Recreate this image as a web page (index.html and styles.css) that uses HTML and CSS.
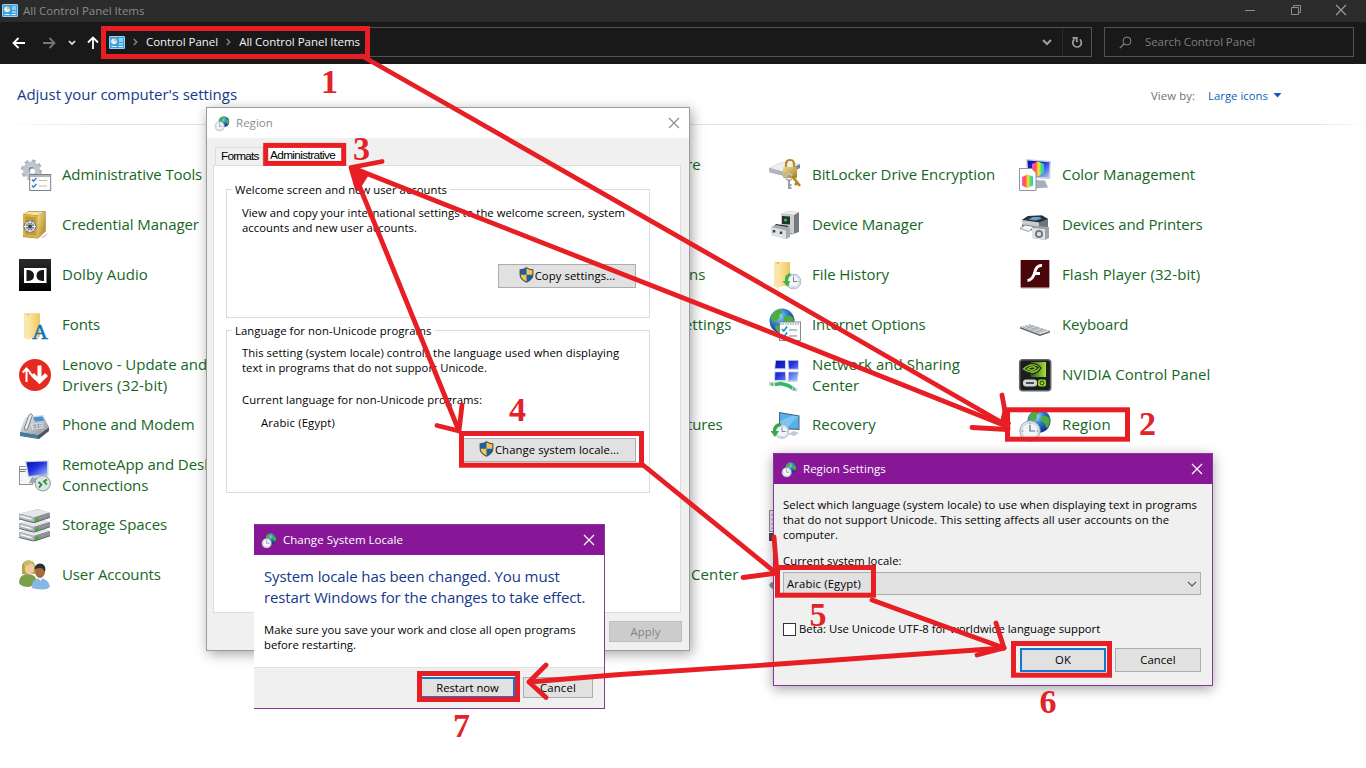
FILE: index.html
```html
<!DOCTYPE html>
<html lang="en">
<head>
<meta charset="utf-8">
<title>All Control Panel Items</title>
<link rel="stylesheet" href="styles.css">
</head>
<body>
<svg class="defs" width="0" height="0" aria-hidden="true">
  <defs>
    <linearGradient id="g-grey" x1="0" y1="0" x2="1" y2="1"><stop offset="0" stop-color="#f4f5f6"/><stop offset="1" stop-color="#8b9096"/></linearGradient>
    <linearGradient id="g-gold" x1="0" y1="0" x2="1" y2="1"><stop offset="0" stop-color="#f3dd8c"/><stop offset="1" stop-color="#a97c1c"/></linearGradient>
    <linearGradient id="g-folder" x1="0" y1="0" x2="1" y2="0"><stop offset="0" stop-color="#fbe6a0"/><stop offset="1" stop-color="#efc75e"/></linearGradient>
    <linearGradient id="g-blue" x1="0" y1="0" x2="1" y2="1"><stop offset="0" stop-color="#0a10a8"/><stop offset=".45" stop-color="#2433dd"/><stop offset="1" stop-color="#9fc3ff"/></linearGradient>
    <linearGradient id="g-black" x1="0" y1="0" x2="0" y2="1"><stop offset="0" stop-color="#2b2b2b"/><stop offset="1" stop-color="#000"/></linearGradient>
    <linearGradient id="g-green" x1="0" y1="0" x2="1" y2="0"><stop offset="0" stop-color="#2e5f14"/><stop offset="1" stop-color="#a9e03a"/></linearGradient>
    <linearGradient id="g-rain" x1="0" y1="0" x2="1" y2="0"><stop offset="0" stop-color="#ff4fd0"/><stop offset=".3" stop-color="#ff5a3a"/><stop offset=".55" stop-color="#ffe53a"/><stop offset=".8" stop-color="#3be36a"/><stop offset="1" stop-color="#35b6ff"/></linearGradient>
    <radialGradient id="g-globe" cx=".38" cy=".3" r=".75"><stop offset="0" stop-color="#9fe0f5"/><stop offset=".45" stop-color="#2f7fd0"/><stop offset="1" stop-color="#0b2a86"/></radialGradient>
    <symbol id="i-globe" viewBox="0 0 24 24">
      <circle cx="12" cy="12" r="11.5" fill="url(#g-globe)"/>
      <path d="M3 6C6 2 10 1 12 2c1 2-1 3-2 4s1 3-1 4-2 3-4 3-3-2-3-3zM14 8c3-2 6-1 8 1 2 4 0 8-2 10-2-1-1-4-3-5s-4-3-3-6zM6 16c2 0 4 1 5 3s0 3-1 4c-3-1-5-4-4-7z" fill="#4fae3a"/>
    </symbol>
    <symbol id="i-clock" viewBox="0 0 22 22">
      <circle cx="11" cy="11" r="10.2" fill="#dfe6ec" stroke="#9aa6b1" stroke-width="1"/>
      <circle cx="11" cy="11" r="8" fill="#f3f6f8" stroke="#c3ccd4" stroke-width=".8"/>
      <path d="M11 5v6h5" fill="none" stroke="#54708a" stroke-width="1.200"/>
      <path d="M11 2.8v1.600M11 17.600v1.600M2.800 11h1.600M17.600 11h1.600" stroke="#8894a0" stroke-width="1"/>
    </symbol>
    <symbol id="i-region" viewBox="0 0 36 36">
      <use href="#i-globe" x="9" y="2" width="24" height="24"/>
      <use href="#i-clock" x="1" y="13" width="22" height="22"/>
    </symbol>
    <symbol id="i-shield" viewBox="0 0 16 17">
      <path d="M8 .8C5.8 2.300 3.400 2.900 1.200 3v5c0 4 3.200 6.600 6.800 8.200 3.600-1.600 6.800-4.200 6.800-8.200V3C12.600 2.900 10.200 2.300 8 .8z" fill="#fbc643"/>
      <path d="M8 .8C5.800 2.300 3.400 2.900 1.200 3v5.300H8zM8 8.300v7.900c3.600-1.600 6.800-4.200 6.800-7.900z" fill="#1261b5"/>
      <path d="M8 .8C5.800 2.300 3.400 2.900 1.200 3v5c0 4 3.200 6.600 6.800 8.200 3.600-1.600 6.800-4.200 6.800-8.200V3C12.600 2.900 10.200 2.300 8 .8z" fill="none" stroke="#4a5055" stroke-width="1.200"/>
    </symbol>
    <symbol id="i-panel" viewBox="0 0 16 13">
      <rect x=".5" y=".5" width="15" height="12" rx=".5" fill="#3aa0e0" stroke="#8ed2fa"/>
      <circle cx="5" cy="5.300" r="2.900" fill="#d8f0ff"/><path d="M5 5.300V2.400A2.900 2.900 0 0 1 7.900 5.300z" fill="#f7b73c"/>
      <path d="M10 3h4M10 5h4M10 8h4M2.500 10.500h5M9.500 10.500h4.500" stroke="#e8f7ff"/>
    </symbol>
    <symbol id="i-folder" viewBox="0 0 17 28">
      <path d="M0 1h15.500v24H3z" fill="#e9bf5a"/><path d="M0 .5l5 3V28l-5-3z" fill="#f9e7ac"/><path d="M5 1h11v22.500L5 26z" fill="url(#g-folder)"/>
    </symbol>
    <symbol id="i-close" viewBox="0 0 12 12"><path d="M1 1l10 10M11 1L1 11" fill="none" stroke="currentColor" stroke-width="1.2"/></symbol>
    <symbol id="i-disk" viewBox="0 0 32 14">
      <path d="M0 5L19 0l12 4v4.500L15 14 0 10z" fill="#666b70"/><path d="M0 4.500L19 0l12 3.500L15 8.500z" fill="#e4e6e8"/><path d="M0 4.500l15 4v5.200L0 10z" fill="#b4b8bc"/><path d="M15 8.500l16-5v4.800l-16 5.400z" fill="#8d9296"/><path d="M16.500 9.600l3-1v3.200l-3 1z" fill="#35b51c"/><path d="M1.500 7.200l11 2.900" stroke="#fff" stroke-width="1.200"/><path d="M0 10l15 3.700 16-5.400" fill="none" stroke="#5b6064" stroke-width=".8"/>
    </symbol>
  </defs>
</svg>

<div class="desktop">
  <header class="titlebar">
    <svg class="app-icon" width="16" height="13"><use href="#i-panel"/></svg>
    <span class="titlebar-text">All Control Panel Items</span>
    <div class="window-buttons">
      <svg width="12" height="12"><path d="M1 6.500h10" stroke="#8d8d8d"/></svg>
      <svg width="12" height="12"><path d="M1.500 3.500h7v7h-7zM3.500 3.500v-2h7v7h-2" fill="none" stroke="#8d8d8d"/></svg>
      <svg class="btn-close" width="12" height="12"><use href="#i-close"/></svg>
    </div>
  </header>

  <nav class="navbar">
    <div class="nav-arrows">
      <svg width="14" height="12"><path d="M13 6H1.500M6.500 1L1.500 6l5 5" fill="none" stroke="#fff" stroke-width="1.800"/></svg>
      <svg width="14" height="12"><path d="M1 6h11.500M7.500 1l5 5-5 5" fill="none" stroke="#767676" stroke-width="1.800"/></svg>
      <svg class="nav-recent" width="8" height="6"><path d="M1 1l3 3 3-3" fill="none" stroke="#e8e8e8" stroke-width="1.700"/></svg>
      <svg class="nav-up" width="12" height="14"><path d="M6 13V1.500M1 6.500l5-5 5 5" fill="none" stroke="#fff" stroke-width="1.800"/></svg>
    </div>
    <div class="address">
      <svg width="16" height="13"><use href="#i-panel"/></svg>
      <svg class="crumb-sep" width="5" height="8"><path d="M.8 1l3 3-3 3" fill="none" stroke="#8a8a8a" stroke-width="1.300"/></svg>
      <span class="crumb">Control Panel</span>
      <svg class="crumb-sep" width="5" height="8"><path d="M.8 1l3 3-3 3" fill="none" stroke="#8a8a8a" stroke-width="1.300"/></svg>
      <span class="crumb">All Control Panel Items</span>
      <svg class="address-drop" width="10" height="7"><path d="M1 1l4 4 4-4" fill="none" stroke="#a0a0a0" stroke-width="2"/></svg>
      <div class="refresh"><svg width="12" height="13"><path d="M8.800 3.400A4.300 4.300 0 1 1 3.600 3.200" fill="none" stroke="#a0a0a0" stroke-width="1.700"/><path d="M1.500 1.900h4.300v4.300" fill="none" stroke="#a0a0a0" stroke-width="1.700"/></svg></div>
    </div>
    <div class="search">
      <svg width="13" height="13"><circle cx="8" cy="5" r="4" fill="none" stroke="#858585"/><path d="M5 8L.8 12.200" stroke="#858585" stroke-width="1.200"/></svg>
      <span>Search Control Panel</span>
    </div>
  </nav>

  <section class="heading-row">
    <h1>Adjust your computer's settings</h1>
    <div class="view-by"><span class="view-label">View by:</span><span class="view-value">Large icons</span><svg width="9" height="5"><path d="M.5 0h8l-4 4.500z" fill="#0b5fb8"/></svg></div>
  </section>
  <div class="rule"></div>

  <main class="items">
    <div class="column">
      <div class="item"><svg class="icon" viewBox="0 0 36 36">
        <circle cx="13.500" cy="13" r="9" fill="none" stroke="#a9b4be" stroke-width="3" stroke-dasharray="3.800 3.270"/>
        <circle cx="13.500" cy="13" r="6" fill="none" stroke="#bdc6ce" stroke-width="5"/><circle cx="13.500" cy="13" r="3.200" fill="#7f8c97"/><circle cx="14.500" cy="14" r="2.600" fill="#fff"/>
        <rect x="11.700" y="17.500" width="21" height="16" fill="#fcfcfc" stroke="#7b8085"/><path d="M12 19h20.500" stroke="#9aa0a5" stroke-width="1.500"/>
        <path d="M14 22.500l1.500 1.700 3-3.200M14 28.500l1.500 1.700 3-3.200" fill="none" stroke="#2c7fd4" stroke-width="1.400"/><path d="M20.500 23.500H29M20.500 29H29" stroke="#c7b9b2" stroke-width="1.200"/></svg><span class="s-1">Administrative Tools</span></div>
      <div class="item"><svg class="icon" viewBox="0 0 36 36">
        <path d="M22 30l9-4-5 5z" fill="#d8d8d8"/><path d="M5 7l6-3h16.500v20L20 31.500 5 30z" fill="#8f6f1c"/><path d="M5 7l6-2.500h16L20 8.500z" fill="#f4e3a0"/><path d="M5 7l15 1.500v22.700L5 29.500z" fill="#d8b24a"/><path d="M20 8.500l7.500-4v20L20 31.200z" fill="url(#g-gold)"/><path d="M7 9.500l11 1v18L7 27.500z" fill="#c39a35"/>
        <circle cx="12" cy="19.500" r="6.500" fill="#6e767c"/><circle cx="12" cy="19.500" r="4.600" fill="none" stroke="#dfe4e7" stroke-width="1.300"/><path d="M12 13.500v12M6 19.500h12M7.800 15.300l8.400 8.400M16.200 15.300l-8.400 8.400" stroke="#eceff1"/><circle cx="12" cy="19.500" r="2" fill="#3d4448"/></svg><span>Credential Manager</span></div>
      <div class="item"><svg class="icon" viewBox="0 0 36 36"><rect x="1" y="2" width="32" height="32" fill="url(#g-black)"/><path d="M6 11h22.500v15H6z" fill="#fff"/><path d="M8.500 13H10q6 .5 6 5.500T10 24H8.500zM26 13h-1.500q-6 .5-6 5.500t6 5.500H26z" fill="#161616"/></svg><span class="s-2">Dolby Audio</span></div>
      <div class="item"><svg class="icon" viewBox="0 0 36 36"><use href="#i-folder" x="6" y="5.500" width="17" height="28"/><text x="14" y="31.500" class="font-glyph">A</text></svg><span>Fonts</span></div>
      <div class="item"><svg class="icon" viewBox="0 0 36 36"><circle cx="17" cy="18" r="16" fill="#e62a22"/><path d="M8.500 25V12M4.800 15.500l3.700-4 3.700 4" fill="none" stroke="#fff" stroke-width="2"/><path d="M11.500 15.500l6 6.500" stroke="#fff" stroke-width="2.200"/><path d="M21.500 8.500v15M14.500 17.500l7 7 7-7" fill="none" stroke="#fff" stroke-width="4"/></svg><span class="s-0">Lenovo - Update and<br><i class="s-3">Drivers (32-bit)</i></span></div>
      <div class="item"><svg class="icon" viewBox="0 0 36 36"><path d="M2 25l18 3 11-8v4l-10 8L2 29z" fill="#50565b"/><path d="M7 10l18-2 6 12-11 8-18-3z" fill="url(#g-grey)"/><path d="M2 25l18 3v3.500L2 28.500z" fill="#3f7fa2"/><path d="M15 10.500l9-1 2.500 4-9.500 1.200z" fill="#3e93d8"/><path d="M13 17l11-1 2 5-12 1.500z" fill="#dde2e6"/><path d="M14 18.500l10-1M15 20.500l10-1M17 17v5M20.500 16.500v5" stroke="#858c92" stroke-width=".7"/><path d="M6 22L11 8q2-2.500 3.500 0L9.500 22q-2 2-3.500 0z" fill="#e9ebed" stroke="#4d5358" stroke-width=".7"/></svg><span>Phone and Modem</span></div>
      <div class="item"><svg class="icon" viewBox="0 0 36 36"><rect x="1.500" y="9.500" width="13" height="18" fill="#f6f7f8" stroke="#8b949c"/><path d="M1.500 12.500h8M1.500 14.500h6" stroke="#6f7a84"/><path d="M7 4l23.500-.5V19L10 20.500z" fill="#c9d1da"/><path d="M8.500 5.200l20.500-.7v12.700L11 19z" fill="url(#g-blue)"/><path d="M13 21l7-.8 1 5-10 1.300z" fill="#9ea8b2"/><circle cx="24.700" cy="26.300" r="7.700" fill="#dde2e4" stroke="#8d979d"/><path d="M20.500 25l3 2.700-2.500 3M29 22.500l-3 2 2.800 3" fill="none" stroke="#23923c" stroke-width="1.800"/></svg><span>RemoteApp and Desktop<br>Connections</span></div>
      <div class="item"><svg class="icon" viewBox="0 0 36 36"><use href="#i-disk" x="1" y="20.500" width="32" height="14"/><use href="#i-disk" x="1" y="11.500" width="32" height="14"/><use href="#i-disk" x="1" y="2" width="32" height="14"/></svg><span>Storage Spaces</span></div>
      <div class="item"><svg class="icon" viewBox="0 0 36 36"><path d="M1 26q0-9 9-9t9 10l-8 3q-8 0-10-4z" fill="#7aa04b"/><path d="M4 17V8q2-5 7-4.500T17 9v8z" fill="#b5a24a"/><ellipse cx="11.500" cy="11.500" rx="4.700" ry="6" fill="#f0c9a0"/><path d="M6 9q6 0 8-4l3 5V7q-2-4-7-3.500T6 9z" fill="#c8ba67"/><path d="M14 31q-1-9 8-10 9 1 10 9-3 3-9 2.500T14 31z" fill="#86b7e6"/><ellipse cx="22" cy="14.500" rx="5" ry="6.500" fill="#a8693c"/><path d="M16.500 13q0-6.500 5.500-6.500t5.500 6.500l-1.500 2q0-4-4-4t-5.500 2z" fill="#2c2f33"/><path d="M20 21l2.500 3 2-3" fill="#fff"/></svg><span class="s-1">User Accounts</span></div>
    </div>
    <div class="column"></div>
    <div class="column column-mid">
      <div class="item"><span>Backup and Restore<br>(Windows 7)</span></div>
      <div class="item"></div>
      <div class="item"><span class="s-1">File Explorer Options</span></div>
      <div class="item"><span class="s-4">Intel® Graphics Settings</span></div>
      <div class="item"></div>
      <div class="item"><span class="s-1">Programs and Features</span></div>
      <div class="item"></div>
      <div class="item"></div>
      <div class="item"><span class="s-2">Windows Mobility Center</span></div>
    </div>
    <div class="column">
      <div class="item"><svg class="icon" viewBox="0 0 36 36"><path d="M1 11L14 5l18 2v4L17 19 1 15z" fill="#7f858a"/><path d="M1 11L14 5l18 2-16 8z" fill="#eceef0"/><path d="M1 11l15 4v4L1 15z" fill="#b1b6ba"/><path d="M18 11V7q0-4 4-4t4 4v4" fill="none" stroke="#b68d2a" stroke-width="2.200"/><rect x="15" y="10" width="14" height="11" rx="1" fill="url(#g-gold)"/><circle cx="21" cy="20" r="3.200" fill="none" stroke="#b9bec2" stroke-width="2"/><path d="M21 23v9M21 28h2.500M21 31h2.500" stroke="#989ea3" stroke-width="2"/><path d="M24 19l8 10M29 26l-2 2" stroke="#ae8525" stroke-width="2.600"/></svg><span>BitLocker Drive Encryption</span></div>
      <div class="item"><svg class="icon" viewBox="0 0 36 36"><path d="M13 7l7-2.500 11 .5v20l-7 2.500L13 24z" fill="#74797d"/><path d="M13 7l7-2.500 11 .5-5 3z" fill="#eeeff0"/><path d="M13 7l13 1v19l-13-3z" fill="#cbced0"/><path d="M14 9l8 .6v8L14 17z" fill="#20342b"/><circle cx="17.500" cy="13" r="1.500" fill="#3fbf74"/><path d="M8 17l13 2-3 2-12-2z" fill="#26292c"/><path d="M3 20l5-2 14 2.500v9.500l-4 2-15-4z" fill="#a4a9ad"/><path d="M3 20l15 3.500V32L3 28z" fill="#dfe1e2"/><path d="M6 23v2.500M13 24.500V27" stroke="#3a3e41" stroke-width="2.500"/></svg><span>Device Manager</span></div>
      <div class="item"><svg class="icon" viewBox="0 0 36 36"><use href="#i-folder" x="6" y="4" width="17" height="28"/><use href="#i-clock" x="17.500" y="16.500" width="16" height="16"/><path d="M22 16q-6 2-5 8h-2.500l5.500 6 2-6h-2q0-4 3-6z" fill="#3faf49"/></svg><span>File History</span></div>
      <div class="item"><svg class="icon" viewBox="0 0 36 36"><use href="#i-globe" x="1" y="1" width="26" height="26"/><rect x="11.500" y="15" width="21" height="18.500" fill="#fafbfc" stroke="#848b92"/><path d="M12 17h20" stroke="#b9c0c6" stroke-width="2" stroke-dasharray="1.500 1"/><path d="M14 22l1.700 2 3.500-4.500M14 28l1.700 2 3.500-4.500" fill="none" stroke="#1a8fc0" stroke-width="1.600"/><path d="M21 23h8M21 29h8" stroke="#7d8890" stroke-width="1.200"/></svg><span class="s-1">Internet Options</span></div>
      <div class="item"><svg class="icon" viewBox="0 0 36 36"><path d="M7 3h11v9.500H6.200zM19.500 3H31v10h-11.500zM6.300 14.500h11.500l.5 10H6zM20 14.500h11l-1.500 10.500H19.500z" fill="#d0d8e4"/><path d="M8 3.800h9v7.500H7.200zM20.500 3.800H30v8h-9zM7.300 15.300h9.700l.5 7.700H7zM21 15.300h9l-1.300 8.200h-8z" fill="url(#g-blue)"/><path d="M7 27.500l6-1 7 2 5 3" fill="none" stroke="#2fb964" stroke-width="3.600"/><path d="M1 26.500l6 .8M24 31.500l5 1.500" stroke="#c6cdd1" stroke-width="3.400"/><path d="M4 26v3M26 30.500v3" stroke="#2fb964" stroke-width="1.500"/></svg><span class="s-5">Network and Sharing<br>Center</span></div>
      <div class="item"><svg class="icon" viewBox="0 0 36 36"><path d="M11 5l20.500 3.500V23L11 22z" fill="#4d6377"/><path d="M12 6.200l18.500 3.200V21.700L12 20.800z" fill="#56b0ec"/><path d="M12 14l12-5.500 6.500 1-12 11.500-6.500-.2z" fill="#7bc4f3"/><path d="M20 27l6-3 5 2-5 3z" fill="#c2cad1"/><use href="#i-clock" x="6.500" y="17" width="15" height="15"/><path d="M13 16q-8 0-8 8H2.500l4.500 6 4-6H8q0-4 5-5z" fill="#36a843"/></svg><span class="s-5">Recovery</span></div>
      <div class="item"></div>
      <div class="item"><svg class="icon" viewBox="0 0 36 36"><rect x="1.500" y="3.500" width="20" height="21" fill="#f2eff6" stroke="#8d8d92"/><path d="M4 7v15" stroke="#a27cc0" stroke-dasharray="2 2.500"/><path d="M1 26h20v8H1z" fill="#4c4455"/></svg></div>
      <div class="item"><svg class="icon" viewBox="0 0 36 36"><path d="M1 28q2-4 8-3v7q-6 1-8-4z" fill="#8a8f94"/></svg></div>
    </div>
    <div class="column">
      <div class="item"><svg class="icon" viewBox="0 0 36 36"><path d="M8 2l25 2-1 18-23-1z" fill="#c6ced8"/><path d="M9.500 3.500l22 1.700-1 15-20-1z" fill="url(#g-blue)"/><path d="M14 7l6-2.500L26 7v9l-6 3.500-6-3.500z" fill="url(#g-rain)"/><path d="M18 23l9 .5 3 7-14 1z" fill="#a6afba"/><path d="M1.500 11.500h12l4.500 4v18H1.500z" fill="#fdfdfd" stroke="#8e959b"/><path d="M4 20l5.500-2.500L15 19.500v9L9 31l-5-2.500z" fill="url(#g-rain)"/></svg><span>Color Management</span></div>
      <div class="item"><svg class="icon" viewBox="0 0 36 36"><path d="M4 13l6-4 14-.5L30 12v9l-7 5-19-5z" fill="#6e757b"/><path d="M4 13l6-4 14-.5L30 12l-9 3.500z" fill="#2c3136"/><path d="M10 12.500l5-2.500h6l3 1.500-6 2z" fill="#5fa3d6"/><path d="M4 13l17 2.500V20L4 17.500z" fill="#c8cdd1"/><path d="M7 18l9 1.500-5 5-9-3z" fill="#f3f4f5" stroke="#70767b" stroke-width=".7"/><path d="M14 21l4-2 13 1v11l-4 2-13-2z" fill="#9da3a8"/><path d="M14 21l13 1.200V33l-13-2z" fill="#e0e3e5"/><circle cx="21" cy="27" r="4" fill="#6e7479"/><circle cx="21" cy="27" r="2.200" fill="#d9dee2"/></svg><span class="s-1">Devices and Printers</span></div>
      <div class="item"><svg class="icon" viewBox="0 0 36 36"><rect x="2.700" y="4" width="28.600" height="27.600" fill="#bfb6b6"/><rect x="2.700" y="3" width="28.600" height="27.400" fill="#490508"/><path d="M24 8.500q-5-.5-6.800 5.500-2.200 9-7.700 9.500" fill="none" stroke="#fff" stroke-width="3"/><path d="M15.500 16.500h6.500" stroke="#fff" stroke-width="3"/></svg><span class="s-2">Flash Player (32-bit)</span></div>
      <div class="item"><svg class="icon" viewBox="0 0 36 36"><path d="M2 20l10-2.500L32 24v1.500L22 29 2 21.500z" fill="#5d6267"/><path d="M2 20l10-2.500L32 24l-10 3.500z" fill="#dcdfe2"/><path d="M5 20l17 6M8 19.200l17 5.800M11 18.400l17 5.600M8 21.500l7-2.500M13 23l7-2.500M18 25l7-2.500" stroke="#9ea4a9" stroke-width=".8"/></svg><span>Keyboard</span></div>
      <div class="item"><svg class="icon" viewBox="0 0 36 36"><rect x="1.700" y="2.700" width="31" height="31" rx="3" fill="#1b1d1e" stroke="#64686b" stroke-width="1.500"/><rect x="13" y="5" width="15" height="15" fill="url(#g-green)"/><path d="M5.500 12q8-7.500 17-2-7 9-17 2zM9.500 12q5-4 8.500-1-4 4-8.500 1z" fill="#1b2a10" stroke="#86bd2e" stroke-width="1.500"/><path d="M13 6.500q7 0 10 4.500-3 5-9 6.500" fill="none" stroke="#1b2a10" stroke-width="1.200"/><rect x="5" y="22.500" width="14" height="7" rx="3" fill="#d3d6d8"/><path d="M8 26h8" stroke="#4b4f52" stroke-width="2"/><rect x="20" y="22.500" width="8" height="7" rx="2" fill="#9ad42f"/><circle cx="24" cy="26" r="2" fill="none" stroke="#26380f"/></svg><span class="s-5">NVIDIA Control Panel</span></div>
      <div class="item"><svg class="icon" viewBox="0 0 36 36"><use href="#i-region"/></svg><span class="s-3">Region</span></div>
    </div>
  </main>

  <section class="window region-window">
    <header class="window-title"><svg width="17" height="17"><use href="#i-region"/></svg><h2>Region</h2><svg class="close" width="12" height="12"><use href="#i-close"/></svg></header>
    <div class="tabs"><span class="tab tab-formats">Formats</span><span class="tab tab-admin">Administrative</span></div>
    <div class="tab-page">
      <fieldset class="group group-welcome">
        <legend>Welcome screen and new user accounts</legend>
        <p>View and copy your international settings to the welcome screen, system<br>accounts and new user accounts.</p>
        <button class="btn btn-copy"><svg width="15" height="16"><use href="#i-shield"/></svg><span>Copy settings...</span></button>
      </fieldset>
      <fieldset class="group group-language">
        <legend>Language for non-Unicode programs</legend>
        <p class="locale-text">This setting (system locale) controls the language used when displaying<br>text in programs that do not support Unicode.</p>
        <p class="current-label">Current language for non-Unicode programs:</p>
        <p class="current-value">Arabic (Egypt)</p>
        <button class="btn btn-locale"><svg width="15" height="16"><use href="#i-shield"/></svg><span>Change system locale...</span></button>
      </fieldset>
    </div>
    <footer class="region-footer"><button class="btn btn-apply">Apply</button></footer>
  </section>

  <section class="window settings-window">
    <header class="window-title purple"><svg width="17" height="17"><use href="#i-region"/></svg><h2>Region Settings</h2><svg class="close" width="12" height="12"><use href="#i-close"/></svg></header>
    <div class="settings-body">
      <p>Select which language (system locale) to use when displaying text in programs<br>that do not support Unicode. This setting affects all user accounts on the<br>computer.</p>
      <p class="locale-label">Current system locale:</p>
      <div class="combo"><span>Arabic (Egypt)</span><svg width="10" height="6"><path d="M.8 .8L5 5l4.200-4.200" fill="none" stroke="#555" stroke-width="1.100"/></svg></div>
      <div class="beta"><span class="checkbox"></span><span class="beta-text">Beta: Use Unicode UTF-8 for worldwide language support</span></div>
      <div class="actions"><button class="btn btn-default">OK</button><button class="btn">Cancel</button></div>
    </div>
  </section>

  <section class="window change-window">
    <header class="window-title purple"><svg width="17" height="17"><use href="#i-region"/></svg><h2>Change System Locale</h2><svg class="close" width="12" height="12"><use href="#i-close"/></svg></header>
    <div class="change-body">
      <h3>System locale has been changed. You must<br>restart Windows for the changes to take effect.</h3>
      <p>Make sure you save your work and close all open programs<br>before restarting.</p>
    </div>
    <footer class="change-footer"><button class="btn btn-default">Restart now</button><button class="btn btn-cancel">Cancel</button></footer>
  </section>

  <svg class="annotations" width="1366" height="768" viewBox="0 0 1366 768">
    <g class="boxes">
      <rect x="103.500" y="28.500" width="264" height="28"/>
      <rect x="1007.500" y="409.800" width="120" height="29.400"/>
      <rect x="265.700" y="145.400" width="78" height="18"/>
      <rect x="461.500" y="433.500" width="180" height="31.700"/>
      <rect x="777.500" y="567.500" width="96" height="27.700"/>
      <rect x="1013.500" y="643.500" width="96" height="31.700"/>
      <rect x="419.500" y="673.500" width="98" height="26"/>
    </g>
    <g class="arrows">
      <path d="M362 56L450 106L770 289L1006 425M972 427.500L1008 429.500M1002 395L1008 428"/>
      <path d="M1006 426L770 332L450 206.500L353 168M382 161.500L351 167.500L357 188"/>
      <path d="M352 168L416 325L459 431M437 425.500L459 431L462 405"/>
      <path d="M643 465L776 573M743 577.500L777 573L774 537"/>
      <path d="M872 600L1004 648M996 623L1004 648L977 655"/>
      <path d="M1004 648L765 665L620 674.500L529 682M546 665L529 682L546 697.500"/>
    </g>
    <path d="M352 167l18 6-10 16z" fill="#e81e25"/>
    <path d="M1003 409l8 14-3 9-8-10z" fill="#e81e25"/>
    <g class="steps">
      <text x="321" y="93">1</text><text x="1139" y="435">2</text><text x="353" y="160">3</text><text x="509" y="421">4</text><text x="809.500" y="626">5</text><text x="1039.500" y="713">6</text><text x="453" y="737">7</text>
    </g>
  </svg>
</div>
</body>
</html>
```
FILE: styles.css
```css
* { box-sizing: border-box; }

body {
  margin: 0;
  font-family: "Open Sans", "Noto Sans", sans-serif;
  font-size: 11.3px;
  line-height: 15px;
  color: #000;
  background: #fff;
}

svg { display: block; flex: none; }
h1, h2, h3, p { margin: 0; font-weight: 400; }
i { font-style: normal; }
.defs { position: absolute; }

.desktop {
  position: relative;
  width: 1366px;
  height: 768px;
  overflow: hidden;
  background: #fff;
}

/* Title bar */
.titlebar {
  display: flex;
  align-items: center;
  height: 22px;
  padding: 0 19px 2px 2px;
  background: #2b2b2b;
}
.titlebar-text { margin-left: 5px; font-size: 11.5px; color: #8b8b8b; }
.window-buttons { display: flex; gap: 33.5px; margin-left: auto; }
.btn-close { color: #9a9a9a; }

/* Navigation bar */
.navbar {
  display: flex;
  align-items: center;
  height: 42px;
  padding: 0 12px 2px;
  font-size: 11.5px;
  background: #191919;
}
.navbar span { padding-bottom: 2px; }
.nav-arrows { display: flex; align-items: center; width: 93px; padding-top: 2px; }
.nav-arrows svg + svg { margin-left: 16px; }
.nav-arrows .nav-recent { margin-left: 12px; }
.nav-arrows .nav-up { margin-left: 11px; }
.address {
  display: flex;
  align-items: center;
  width: 987px;
  height: 30px;
  padding-left: 3px;
  border: 1px solid #535353;
  color: #f4f4f4;
}
.crumb { letter-spacing: -.03px; }
.crumb-sep { margin: 0 8.500px 0 7.500px; }
.address-drop { margin-left: auto; }
.refresh {
  display: flex;
  align-items: center;
  justify-content: center;
  width: 29px;
  height: 28px;
  margin-left: 10px;
  border-left: 1px solid #2a2a2a;
}
.search {
  display: flex;
  align-items: center;
  gap: 13px;
  width: 250px;
  height: 30px;
  margin-left: 12px;
  padding-left: 14px;
  border: 1px solid #535353;
  color: #7f7f7f;
  letter-spacing: -.09px;
}

/* Heading */
.heading-row {
  display: flex;
  align-items: center;
  justify-content: space-between;
  height: 60px;
  padding: 0 84px 0 17px;
}
h1 { font-size: 15px; line-height: 20px; color: #15388c; letter-spacing: -.034px; }
.view-by { display: flex; align-items: center; padding-top: 2px; }
.view-label { margin-right: 13px; color: #6a7078; letter-spacing: .1px; }
.view-value { margin-right: 5px; color: #0b5fb8; letter-spacing: .04px; }
.rule { height: 1px; background: linear-gradient(90deg, #fff, #dbe2ee 8%, #dbe2ee 96%, #fff); }

/* Item grid */
.items {
  display: grid;
  grid-template-columns: repeat(5, 250px);
  padding: 25px 0 0 18px;
  font-size: 15px;
  line-height: 21px;
  color: #17661f;
  letter-spacing: -.06px;
}
.item { display: flex; align-items: center; gap: 8px; height: 50px; white-space: nowrap; }
.item span { padding-bottom: 1px; }
.column-mid .item { padding-left: 44px; }
.icon { width: 36px; height: 36px; }
.font-glyph { font-family: "Liberation Serif", serif; font-size: 22px; font-weight: 400; fill: #1172b8; stroke: #1172b8; stroke-width: .6px; }
.s-0 { letter-spacing: -.03px; }
.s-1 { letter-spacing: -.12px; }
.s-2 { letter-spacing: .09px; }
.s-3 { letter-spacing: .15px; }
.s-4 { letter-spacing: .03px; }
.s-5 { letter-spacing: .04px; }

/* Windows */
.window { position: absolute; display: flex; flex-direction: column; background: #f0f0f0; }
.window-title {
  display: flex;
  align-items: center;
  height: 30px;
  padding: 0 9px 0 7px;
  font-size: 11.5px;
  color: #8d8d8d;
  background: #fff;
}
.window-title h2 { margin-left: 5px; padding-bottom: 2px; font-size: inherit; line-height: 15px; letter-spacing: .03px; }
.window-title .close { margin-left: auto; }
.purple { color: #fff; background: #881798; }

.btn {
  display: flex;
  align-items: center;
  justify-content: center;
  height: 24px;
  padding: 0 0 2px;
  border: 1px solid #adadad;
  font: inherit;
  letter-spacing: .08px;
  color: #000;
  background: #e1e1e1;
}
.btn-default { border: 2px solid #1476cc; }

.region-window {
  left: 206px;
  top: 107px;
  width: 484px;
  height: 544px;
  border: 1px solid #9c9c9c;
  box-shadow: 2px 3px 12px rgba(0, 0, 0, .36);
}
.tabs {
  display: flex;
  align-items: flex-end;
  height: 27px;
  padding-left: 8px;
  font-family: "Liberation Sans", sans-serif;
  font-size: 11.8px;
}
.tab { display: flex; align-items: center; border: 1px solid #dcdcdc; border-bottom: 0; }
.tab-formats { width: 48px; height: 18px; padding-left: 5px; letter-spacing: -.8px; }
.tab-admin { width: 83px; height: 20px; padding: 0 0 1px 6px; background: #fff; letter-spacing: -.63px; }
.tab-page {
  width: 468px;
  height: 448px;
  margin-left: 6px;
  padding: 16px 0 0 12px;
  border: 1px solid #dcdcdc;
  background: #fff;
}
.group { width: 424px; min-width: 0; margin: 0; padding: 0 13px 0 5px; border: 1px solid #dcdcdc; }
.group legend { padding: 0 3px; letter-spacing: .03px; }
.group p { margin-left: 10px; letter-spacing: .014px; white-space: nowrap; }
.group legend + p { margin-top: 8px; }
.group .btn { margin-left: auto; }
.group .btn svg { margin-right: 1px; }
.group-welcome { height: 136px; }
.group-language { height: 170px; margin-top: 5px; }
.group-language legend { letter-spacing: .08px; }
.group-language legend + p { margin-top: 7px; }
.group .locale-text { letter-spacing: .055px; }
.group .current-label { margin-top: 17px; letter-spacing: .064px; }
.group .current-value { margin: 8px 0 0 29px; letter-spacing: .15px; }
.btn-copy { width: 138px; margin-top: 29px; }
.btn-locale { width: 174px; margin-top: 8px; }
.region-footer { display: flex; justify-content: flex-end; padding: 8px 7px 0; }
.btn-apply { width: 73px; height: 21px; padding: 0; border-color: #bfbfbf; color: #838383; background: #ccc; }

.settings-window {
  left: 773px;
  top: 453px;
  width: 440px;
  height: 233px;
  border: 1px solid #86359a;
  box-shadow: 0 3px 12px rgba(0, 0, 0, .36);
}
.settings-body { padding: 13px 11px 0 9px; letter-spacing: .063px; white-space: nowrap; }
.locale-label { margin-top: 11px; }
.combo {
  display: flex;
  align-items: center;
  justify-content: space-between;
  height: 23px;
  margin-top: 4px;
  padding: 0 3px;
  border: 1px solid #adadad;
  background: #e1e1e1;
  letter-spacing: .15px;
}
.beta { display: flex; align-items: center; gap: 3px; height: 15px; margin-top: 27px; letter-spacing: .01px; }
.beta-text { padding-bottom: 2px; }
.checkbox { width: 13px; height: 13px; border: 1px solid #333; background: #fff; }
.actions { display: flex; justify-content: flex-end; gap: 9px; margin-top: 11px; }
.actions .btn { width: 86px; }

.change-window {
  left: 254px;
  top: 524px;
  width: 351px;
  height: 185px;
  border: solid #86359a;
  border-width: 1px 1px 1px 0;
}
.change-body { height: 112px; padding: 11px 0 0 10px; background: #fff; white-space: nowrap; }
.change-body h3 { font-size: 15px; line-height: 21px; color: #15388c; letter-spacing: -.11px; }
.change-body p { margin-top: 14px; }
.change-footer { display: flex; justify-content: flex-end; gap: 8px; padding: 9px 11px 0; border-top: 1px solid #dfdfdf; }
.change-footer .btn { width: 95px; height: 21px; padding: 0; letter-spacing: -.05px; }
.change-footer .btn-cancel { width: 70px; letter-spacing: .15px; }

/* Step annotations */
.annotations { position: absolute; left: 0; top: 0; }
.boxes rect { fill: none; stroke: #e81e25; stroke-width: 5; }
.arrows path { fill: none; stroke: #e81e25; stroke-width: 4.8; stroke-linecap: round; stroke-linejoin: round; }
.steps text { font-family: "Liberation Serif", serif; font-size: 34px; font-weight: 700; fill: #e2232a; }
```
